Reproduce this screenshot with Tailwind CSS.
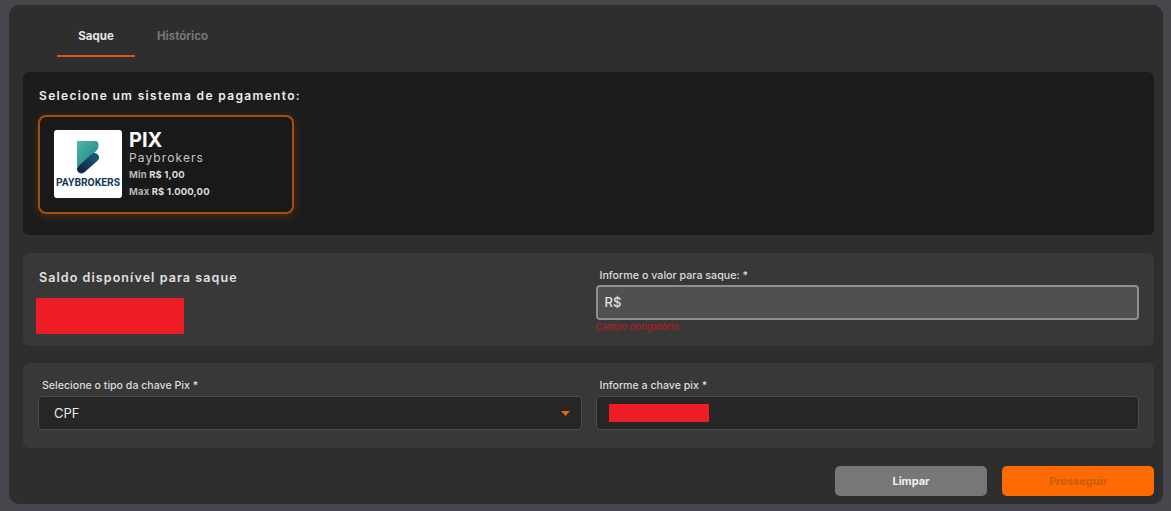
<!DOCTYPE html>
<html lang="pt-BR">
<head>
    <meta charset="UTF-8">
    <meta name="viewport" content="width=device-width, initial-scale=1.0">
    <title>Saque</title>
    <script src="https://cdn.jsdelivr.net/npm/@tailwindcss/browser@4"></script>
</head>
<body class="bg-[#47464c] font-['Inter',sans-serif] h-[511px] overflow-hidden">
    <div class="ml-[9px] mt-[5px] w-[1154px] h-[499px] bg-[#2e2e2e] rounded-[10px] pl-[14px] pr-[9px]">
        <!-- Tabs -->
        <div class="flex pl-[34px] h-[53px]">
            <div class="w-[78px] h-[52px] border-b-2 border-[#d9590b] text-center text-[11.500px] font-bold text-[#e6e6e6] pt-[23px] leading-[16px]">Saque</div>
            <div class="ml-[22px] text-[11.500px] font-bold text-[#77777a] pt-[23px] leading-[16px]">Histórico</div>
        </div>

        <!-- Payment system -->
        <section class="mt-[14px] h-[163px] bg-[#1c1c1c] rounded-[6px] px-[15px] pt-[16px]">
            <h2 class="pl-[1px] text-[12px] leading-[16px] font-semibold tracking-[1.340px] text-[#eeeeee]">Selecione um sistema de pagamento:</h2>
            <div class="mt-[11px] w-[256px] h-[99px] bg-[#191919] border-2 border-[#a44e10] rounded-[8px] shadow-[0_2px_10px_rgba(200,90,10,0.3)] flex pl-[14px] pt-[13px]">
                <div class="w-[68px] h-[68px] bg-white rounded-[3px] flex flex-col items-center pt-[11px] shrink-0">
                    <svg width="22" height="33" viewBox="0 0 22 33">
                        <defs>
                            <linearGradient id="top" x1="0" y1="0" x2="1" y2="1">
                                <stop offset="0" stop-color="#4cb9a9"/>
                                <stop offset="1" stop-color="#1d7f82"/>
                            </linearGradient>
                            <linearGradient id="bot" x1="1" y1="0" x2="0" y2="1">
                                <stop offset="0" stop-color="#1c5274"/>
                                <stop offset="1" stop-color="#0c2a48"/>
                            </linearGradient>
                        </defs>
                        <path d="M0 0H18C20.500 0 21.500 1.500 21.500 4C21.500 7 20 10 17 12L0 26Z" fill="url(#top)"/>
                        <path d="M4.500 28L17.500 16.500" stroke="url(#bot)" stroke-width="9" stroke-linecap="round"/>
                    </svg>
                    <div class="mt-[3px] text-[10.300px] leading-[12px] font-bold text-[#12385a] font-['Roboto',sans-serif]">PAYBROKERS</div>
                </div>
                <div class="ml-[7px] text-[#f2f2f2]">
                    <div class="text-[20px] leading-[18px] font-bold mt-[1px] text-white">PIX</div>
                    <div class="text-[12px] leading-[16px] mt-[1px] tracking-[1.100px] text-[#c4c4c4]">Paybrokers</div>
                    <div class="text-[9.500px] leading-[12px] font-bold mt-[3px] tracking-[0.15px] text-[#dddddd]"><span class="text-[#b5b5b5]">Min</span> R$ 1,00</div>
                    <div class="text-[9.500px] leading-[12px] font-bold mt-[5px] tracking-[0.15px] text-[#dddddd]"><span class="text-[#b5b5b5]">Max</span> R$ 1.000,00</div>
                </div>
            </div>
        </section>

        <!-- Balance and amount -->
        <section class="mt-[18px] h-[93px] bg-[#383838] rounded-[6px] px-[15px] grid grid-cols-2 gap-[14px]">
            <div class="pt-[16px]">
                <h2 class="pl-[1px] text-[12.500px] leading-[18px] font-semibold tracking-[1.080px] text-[#e2e2e2]">Saldo disponível para saque</h2>
                <div class="mt-[11px] -ml-[2px] w-[148px] h-[36px] bg-[#ee1c25]"></div>
            </div>
            <div class="pt-[16px]">
                <label class="block pl-[4px] text-[10.700px] leading-[14px] font-medium text-[#dddddd]">Informe o valor para saque: *</label>
                <div class="mt-[2px] h-[35px] bg-[#505050] border-2 border-[#8e8e8e] rounded-[4px] flex items-center pl-[7px] pt-[1px] text-[13px] font-medium text-[#e2e2e2]">R$</div>
                <p class="mt-[1px] text-[9.300px] leading-[12px] font-medium text-[#b02024]">Campo obrigatório</p>
            </div>
        </section>

        <!-- Pix key -->
        <section class="mt-[17px] h-[85px] bg-[#383838] rounded-[6px] px-[15px] grid grid-cols-2 gap-[14px] pt-[16px]">
            <div>
                <label class="block pl-[4px] text-[10.600px] leading-[14px] font-medium text-[#dddddd]">Selecione o tipo da chave Pix *</label>
                <div class="mt-[3px] h-[34px] bg-[#262626] border border-[#4c4c4c] rounded-[4px] flex items-center justify-between pl-[15px] pr-[11px] pt-[1px] text-[13px] text-[#e6e6e6]">
                    CPF
                    <svg width="9" height="5" viewBox="0 0 9 5"><path d="M0 0H9L4.500 5Z" fill="#e06a10"/></svg>
                </div>
            </div>
            <div>
                <label class="block pl-[4px] text-[10.600px] leading-[14px] font-medium text-[#dddddd]">Informe a chave pix *</label>
                <div class="mt-[3px] h-[34px] bg-[#262626] border border-[#4c4c4c] rounded-[4px] flex items-center pl-[12px]">
                    <div class="w-[100px] h-[18px] bg-[#ee1c25]"></div>
                </div>
            </div>
        </section>

        <!-- Actions -->
        <div class="mt-[18px] flex justify-end gap-[15px]">
            <button class="w-[152px] h-[30px] bg-[#777777] rounded-[5px] text-[11px] font-bold text-[#f0f0f0]">Limpar</button>
            <button class="w-[152px] h-[30px] bg-[#ff6b00] rounded-[5px] text-[11px] font-bold text-[#c95a0c]">Prosseguir</button>
        </div>
    </div>
</body>
</html>
